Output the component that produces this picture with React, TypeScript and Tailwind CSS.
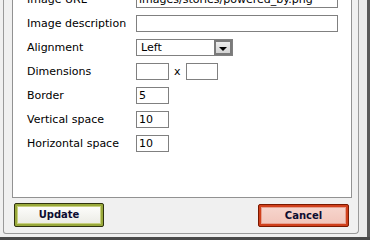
import React from "react";

const font = { fontFamily: '"DejaVu Sans", Verdana, sans-serif' };

function Row({ label, children }: { label: string; children: React.ReactNode }) {
  return (
    <div className="flex h-[24px] items-start">
      <div className="mt-[3px] w-[109px] shrink-0 text-[11px] leading-[17px] text-black">{label}</div>
      <div className="mt-[3px] flex items-center">{children}</div>
    </div>
  );
}

function Input({ w, value }: { w: string; value?: string }) {
  return (
    <div className={`${w} h-[17px] border border-[#808080] bg-white pl-[2px] text-[11px] leading-[15px] text-black whitespace-nowrap overflow-hidden`}>
      {value ?? ""}
    </div>
  );
}

export default function App() {
  return (
    <div className="flex h-[240px] w-[370px] flex-col overflow-hidden bg-[#f0f0f0]" style={font}>
      <div className="flex h-[237px] shrink-0">
        <div className="w-[3px] shrink-0" />
        <div className="flex h-[234px] w-[356px] shrink-0 flex-col rounded-br-[4px] rounded-bl-[3px] border-b border-l border-r border-[#9a9a9a] bg-[#f0f0f0]">
          <div className="ml-[8px] mt-[-20px] flex w-[340px] flex-1 flex-col border border-[#929292] bg-white pl-[14px] pt-[7px]">
            <Row label="Image URL">
              <Input w="w-[202px]" value="images/stories/powered_by.png" />
            </Row>
            <Row label="Image description">
              <Input w="w-[202px]" />
            </Row>
            <Row label="Alignment">
              <div className="flex h-[17px] w-[97px] border border-[#808080] bg-white">
                <div className="flex-1 pl-[4px] text-[11px] leading-[15px] text-black">Left</div>
                <div className="flex h-[15px] w-[18px] items-end justify-center border-2 border-[#7a7a7a] bg-[linear-gradient(#ececec,#d4d4d4)] pb-[1px]">
                  <svg width="8" height="5" viewBox="0 0 8 5">
                    <path d="M0 0 L8 0 L4 4 Z" fill="#000" />
                  </svg>
                </div>
              </div>
            </Row>
            <Row label="Dimensions">
              <Input w="w-[33px]" />
              <span className="mx-[5px] text-[11px] leading-[17px] text-black">x</span>
              <Input w="w-[32px]" />
            </Row>
            <Row label="Border">
              <Input w="w-[33px]" value="5" />
            </Row>
            <Row label="Vertical space">
              <Input w="w-[33px]" value="10" />
            </Row>
            <Row label="Horizontal space">
              <Input w="w-[33px]" value="10" />
            </Row>
          </div>
          <div className="flex h-[35px] shrink-0 items-start justify-between pl-[10px] pr-[9px] pt-[5px]">
            <div className="h-[24px] w-[90px] rounded-[2px] border border-[#2e3210] p-[2px] bg-[#98a83a]">
              <div className="flex h-full w-full items-center justify-center border border-[#c8d080] bg-[linear-gradient(#fcfcfa,#ecece6)] text-[10px] font-bold leading-none text-[#0c0c30]">
                Update
              </div>
            </div>
            <div className="mt-[1px] h-[23px] w-[91px] rounded-[2px] border border-[#7a1800] p-[2px] bg-[#d0401c]">
              <div className="flex h-full w-full items-center justify-center border border-[#e8a090] bg-[linear-gradient(#f6d4cc,#f2c6bc)] text-[10px] font-bold leading-none text-[#0c0c30]">
                Cancel
              </div>
            </div>
          </div>
        </div>
        <div className="w-[8px] shrink-0 bg-[#ececec]" />
        <div className="flex-1 bg-[#5a5a5a]" />
      </div>
      <div className="flex-1 bg-[#4a4a4a]" />
    </div>
  );
}
